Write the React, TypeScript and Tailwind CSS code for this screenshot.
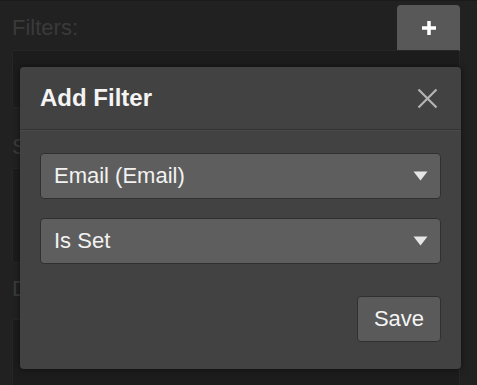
import React from "react";

const font = { fontFamily: '"Liberation Sans", Arial, sans-serif' };

function Caret() {
  return (
    <svg width="15" height="10" viewBox="0 0 15 10" className="shrink-0">
      <path d="M0.5 0.5 L14.5 0.5 L7.5 9.5 Z" fill="#e6e6e6" />
    </svg>
  );
}

function Select({ label }: { label: string }) {
  return (
    <div className="flex h-[46px] items-center justify-between rounded-[4px] border border-[#303030] bg-[#5e5e5e] pl-[13px] pr-[12px]">
      <span className="text-[22px] leading-none text-[#f2f2f2]">{label}</span>
      <Caret />
    </div>
  );
}

export default function App() {
  return (
    <div className="relative h-[385px] w-[477px] overflow-hidden bg-[#212121]" style={font}>
      {/* underlying page */}
      <div className="flex flex-col border-t border-[#1a1a1a]">
        <div className="flex h-[49px] items-start justify-between pl-[12px] pr-[17px]">
          <span className="mt-[16px] text-[22px] leading-none text-[#3a3a3a]">Filters:</span>
          <div className="mt-[4px] flex h-[46px] w-[63px] items-center justify-center rounded-t-[4px] bg-[#585858]">
            <svg width="16" height="16" viewBox="0 0 16 16">
              <path d="M8 1 V15 M1 8 H15" stroke="#ffffff" strokeWidth="3.5" />
            </svg>
          </div>
        </div>
        <div className="mx-[12px] mr-[17px] h-[58px] rounded-[2px] border border-[#262626] bg-[#1c1c1c]" />
        <span className="ml-[12px] mt-[28px] text-[22px] leading-none text-[#3a3a3a]">Sort:</span>
        <div className="mx-[12px] mr-[17px] mt-[10px] h-[95px] rounded-[2px] border border-[#262626] bg-[#1c1c1c]" />
        <span className="ml-[12px] mt-[15px] text-[22px] leading-none text-[#3a3a3a]">Display:</span>
        <div className="mx-[12px] mr-[17px] mt-[19px] h-[70px] rounded-[2px] border border-[#262626] bg-[#1c1c1c]" />
      </div>

      {/* modal */}
      <div className="absolute left-[20px] top-[67px] flex h-[302px] w-[441px] flex-col rounded-[4px] bg-[#424242] shadow-[0_0_6px_rgba(0,0,0,0.5)]">
        <div className="flex h-[63px] items-center justify-between border-b border-[#333333] pl-[20px] pr-[23px] shadow-[0_1px_0_#4a4a4a]">
          <span className="text-[24px] font-bold leading-none text-[#f4f4f4]">Add Filter</span>
          <svg width="21" height="21" viewBox="0 0 21 21">
            <path d="M1.5 1.5 L19.5 19.5 M19.5 1.5 L1.5 19.5" stroke="#b4b4b4" strokeWidth="2.2" />
          </svg>
        </div>
        <div className="flex flex-col px-[20px] pt-[23px]">
          <Select label="Email (Email)" />
          <div className="h-[19px]" />
          <Select label="Is Set" />
          <div className="mt-[32px] flex justify-end">
            <div className="flex h-[46px] w-[84px] items-center justify-center rounded-[4px] border border-[#303030] bg-[#5a5a5a]">
              <span className="text-[22px] leading-none text-[#f4f4f4]">Save</span>
            </div>
          </div>
        </div>
      </div>
    </div>
  );
}
